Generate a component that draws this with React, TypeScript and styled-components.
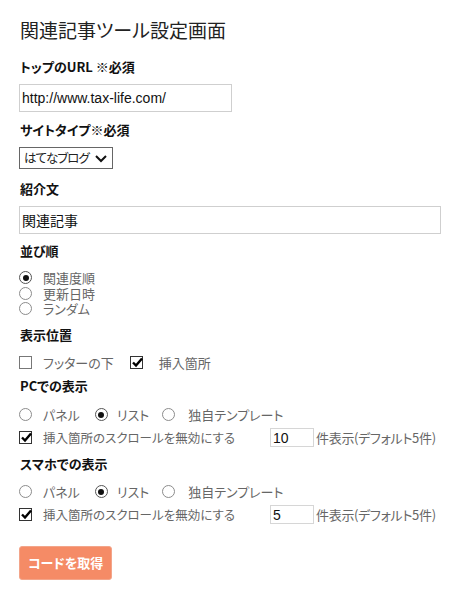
import React from 'react';
import styled, { createGlobalStyle } from 'styled-components';

const GlobalStyle = createGlobalStyle`
  body {
    margin: 0;
    background: #fff;
    color: #222;
    font-family: 'Noto Sans CJK JP', 'Noto Sans', sans-serif;
    font-feature-settings: 'palt';
  }
`;

const Page = styled.div`
  padding: 18px 19px 20px;
`;

const Title = styled.h1`
  margin: 0 0 16px 1px;
  font-size: 19px;
  font-weight: normal;
  line-height: 24px;
  color: #222;
`;

const Field = styled.div<{ $mb?: number }>`
  margin-bottom: ${(p) => (p.$mb ?? 9)}px;
`;

const Label = styled.div<{ $mb?: number }>`
  margin: 0 0 ${(p) => (p.$mb ?? 8)}px 1px;
  font-size: 13px;
  font-weight: bold;
  line-height: 18px;
  color: #111;
`;

const TextInput = styled.input<{ $w: number }>`
  display: block;
  box-sizing: border-box;
  width: ${(p) => p.$w}px;
  height: 28px;
  margin: 0;
  padding: 0 2px;
  border: 1px solid #cfcfcf;
  font-family: 'Liberation Sans', 'Noto Sans CJK JP', sans-serif;
  font-size: 14px;
  color: #111;
  outline: none;
`;

const SelectBox = styled.div`
  position: relative;
  box-sizing: border-box;
  display: flex;
  align-items: center;
  justify-content: space-between;
  width: 94px;
  height: 22px;
  padding: 0 5px 0 4px;
  border: 1px solid #666;
  background: #fff;
`;

const SelectValue = styled.span`
  flex-shrink: 0;
  white-space: nowrap;
  font-size: 12.5px;
  line-height: 20px;
  letter-spacing: -1px;
  color: #222;
`;

const Select = styled.select`
  position: absolute;
  inset: 0;
  width: 100%;
  height: 100%;
  opacity: 0;
  cursor: pointer;
`;

const List = styled.div`
  display: flex;
  flex-direction: column;
`;

const Row = styled.div<{ $h?: number }>`
  display: flex;
  align-items: center;
  height: ${(p) => p.$h ?? 18}px;
`;

const Option = styled.label<{ $gap?: number; $mr?: number }>`
  display: inline-flex;
  align-items: center;
  gap: ${(p) => p.$gap ?? 11}px;
  margin-right: ${(p) => p.$mr ?? 0}px;
  height: 15.5px;
  font-size: 13px;
  line-height: 15.5px;
  color: #666;
  cursor: pointer;
`;

const HiddenInput = styled.input`
  display: none;
`;

const RadioMark = styled.span<{ $on: boolean }>`
  box-sizing: border-box;
  display: inline-flex;
  align-items: center;
  justify-content: center;
  width: 13px;
  height: 13px;
  border-radius: 50%;
  border: 1px solid ${(p) => (p.$on ? '#555' : '#8c8c8c')};
  background: #fff;
  &::after {
    content: '';
    display: ${(p) => (p.$on ? 'block' : 'none')};
    width: 6px;
    height: 6px;
    border-radius: 50%;
    background: #111;
  }
`;

const CheckMark = styled.span<{ $on: boolean }>`
  box-sizing: border-box;
  position: relative;
  display: inline-block;
  width: 13px;
  height: 13px;
  border: 1px solid ${(p) => (p.$on ? '#333' : '#777')};
  background: #fff;
  svg {
    position: absolute;
    left: 0;
    top: -1px;
  }
`;

const NumberInput = styled.input`
  box-sizing: border-box;
  width: 44px;
  height: 19px;
  margin: 0 2px 0 0;
  padding: 0 2px;
  border: 1px solid #d6d6d6;
  font-family: 'Liberation Sans', sans-serif;
  font-size: 14px;
  color: #111;
  outline: none;
`;

const Note = styled.span`
  font-size: 13px;
  color: #666;
  letter-spacing: -0.3px;
`;

const ScrollOption = styled(Option)`
  width: 251px;
  font-size: 12.5px;
`;

const Button = styled.button`
  box-sizing: border-box;
  height: 34px;
  margin-top: 12px;
  padding: 0 8px;
  border: 1px solid #f3a58a;
  border-radius: 3px;
  background: #f58b66;
  color: #fff;
  font-family: 'Noto Sans CJK JP', sans-serif;
  font-feature-settings: 'palt';
  font-size: 13px;
  font-weight: bold;
  cursor: pointer;
`;

function Tick() {
  return (
    <svg width='13' height='13' viewBox='0 0 13 13'>
      <path d='M2 6.5 L5 9.5 L11 2.5' fill='none' stroke='#000' strokeWidth='2.4' />
    </svg>
  );
}

function Radio({ name, on, children, mr, gap }: { name: string; on?: boolean; children: React.ReactNode; mr?: number; gap?: number }) {
  return (
    <Option $mr={mr} $gap={gap}>
      <HiddenInput type='radio' name={name} defaultChecked={on} />
      <RadioMark $on={!!on} />
      {children}
    </Option>
  );
}

function Check({ on, children, mr, gap }: { on?: boolean; children: React.ReactNode; mr?: number; gap?: number }) {
  return (
    <Option $mr={mr} $gap={gap}>
      <HiddenInput type='checkbox' defaultChecked={on} />
      <CheckMark $on={!!on}>{on && <Tick />}</CheckMark>
      {children}
    </Option>
  );
}

function DeviceField({ name, count }: { name: string; count: string }) {
  return (
    <>
      <Row>
        <Radio name={name} mr={15}>パネル</Radio>
        <Radio name={name} on mr={13} gap={9}>リスト</Radio>
        <Radio name={name} gap={13}>独自テンプレート</Radio>
      </Row>
      <Row $h={20} style={{ marginTop: 4 }}>
        <ScrollOption>
          <HiddenInput type='checkbox' defaultChecked />
          <CheckMark $on>
            <Tick />
          </CheckMark>
          挿入箇所のスクロールを無効にする
        </ScrollOption>
        <NumberInput defaultValue={count} />
        <Note>件表示(デフォルト5件)</Note>
      </Row>
    </>
  );
}

export default function App() {
  return (
    <Page>
      <GlobalStyle />
      <Title>関連記事ツール設定画面</Title>

      <Field>
        <Label>トップのURL ※必須</Label>
        <TextInput $w={213} defaultValue='http://www.tax-life.com/' />
      </Field>

      <Field $mb={11}>
        <Label>サイトタイプ※必須</Label>
        <SelectBox>
          <SelectValue>はてなブログ</SelectValue>
          <svg width='12' height='9' viewBox='0 0 12 9'>
            <path d='M1 2 L6 7 L11 2' fill='none' stroke='#111' strokeWidth='2' />
          </svg>
          <Select defaultValue='hatena'>
            <option value='hatena'>はてなブログ</option>
          </Select>
        </SelectBox>
      </Field>

      <Field $mb={8}>
        <Label>紹介文</Label>
        <TextInput $w={422} defaultValue='関連記事' />
      </Field>

      <Field>
        <Label $mb={10}>並び順</Label>
        <List>
          <Radio name='order' on>関連度順</Radio>
          <Radio name='order'>更新日時</Radio>
          <Radio name='order'>ランダム</Radio>
        </List>
      </Field>

      <Field $mb={5}>
        <Label $mb={10}>表示位置</Label>
        <Row>
          <Check mr={16}>フッターの下</Check>
          <Check on gap={16}>挿入箇所</Check>
        </Row>
      </Field>

      <Field $mb={7}>
        <Label $mb={11}>PCでの表示</Label>
        <DeviceField name='pc' count='10' />
      </Field>

      <Field $mb={9}>
        <Label $mb={10}>スマホでの表示</Label>
        <DeviceField name='sp' count='5' />
      </Field>

      <Button type='button'>コードを取得</Button>
    </Page>
  );
}
